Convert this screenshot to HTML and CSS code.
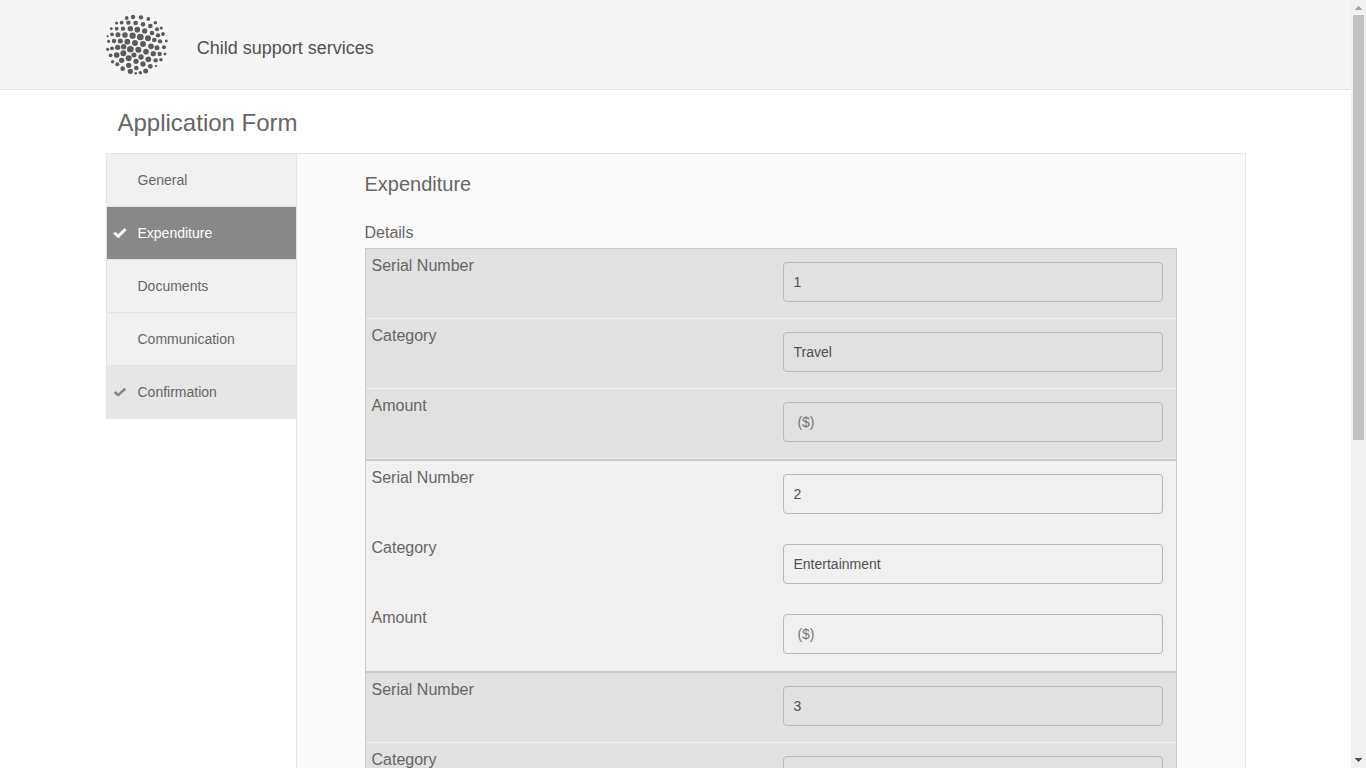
FILE: index.html
```html
<!DOCTYPE html>
<html lang="en">
<head>
<meta charset="utf-8">
<title>Child support services</title>
<link rel="stylesheet" href="styles.css">
</head>
<body>
<div class="viewport">
<div class="page">
  <header class="header">
    <svg class="logo" viewBox="0 0 222 222" id="logo" aria-hidden="true"></svg>
    <span class="brand">Child support services</span>
  </header>
  <main class="main">
    <h1 class="title">Application Form</h1>
    <div class="panel">
      <nav class="nav">
        <a class="tab">General</a>
        <a class="tab active"><svg class="check" viewBox="0 0 14 12"><path d="M1.3 5.7 5.2 9.3 12.5 2.2"/></svg>Expenditure</a>
        <a class="tab">Documents</a>
        <a class="tab">Communication</a>
        <a class="tab done"><svg class="check" viewBox="0 0 14 12"><path d="M1.7 6 5.2 9.1 12.2 2.7"/></svg>Confirmation</a>
      </nav>
      <section class="content">
        <h2 class="section-title">Expenditure</h2>
        <div class="caption">Details</div>
        <div class="group odd">
          <div class="row"><label>Serial Number</label><input value="1"></div>
          <div class="row"><label>Category</label><input value="Travel"></div>
          <div class="row"><label>Amount</label><input placeholder=" ($)"></div>
        </div>
        <div class="group even">
          <div class="row"><label>Serial Number</label><input value="2"></div>
          <div class="row"><label>Category</label><input value="Entertainment"></div>
          <div class="row"><label>Amount</label><input placeholder=" ($)"></div>
        </div>
        <div class="group odd">
          <div class="row"><label>Serial Number</label><input value="3"></div>
          <div class="row"><label>Category</label><input></div>
        </div>
      </section>
    </div>
  </main>
</div>
<div class="scrollbar">
  <svg class="arrow" viewBox="0 0 15 15"><path d="M4 10h7L7.5 6z" fill="#a3a3a3"/></svg>
  <div class="thumb"></div>
  <svg class="arrow end" viewBox="0 0 15 15"><path d="M4 5h7L7.5 9z" fill="#505050"/></svg>
</div>
</div>
<script src="logo.js"></script>
</body>
</html>
```

FILE: styles.css
```css
* { box-sizing: border-box; }
body { margin: 0; overflow: hidden; font-family: "Liberation Sans", Arial, sans-serif; color: #666; background: #fff; }
.viewport { display: flex; height: 768px; overflow: hidden; }
.page { flex: 1; min-width: 0; }
.header { height: 90px; padding-left: 100px; display: flex; background: #f5f5f5; border-bottom: 1px solid #e4e4e4; }
.logo { width: 74px; height: 74px; margin-top: 8px; fill: #5a5a5a; }
.brand { margin: 37px 0 0 22.8px; font-size: 18px; line-height: 22px; color: #505050; }
.main { padding-left: 105.5px; }
.title { margin: 0; padding: 18px 0 0 12px; height: 63px; font-size: 24px; line-height: 30px; font-weight: 400; }
.panel { display: flex; width: 1140px; border-top: 1px solid #e5e5e5; }
.nav { width: 190px; align-self: flex-start; border-left: 1px solid #e5e5e5; }
.tab { display: flex; align-items: center; height: 53px; padding-left: 31px; font-size: 14px; background: #f1f1f1; border-bottom: 1px solid #e5e5e5; }
.tab.active { padding-left: 6.5px; color: #fff; background: #888; }
.tab.done { padding-left: 6.5px; background: #e6e6e6; }
.check { width: 14px; height: 12px; margin-right: 10.5px; fill: none; stroke: #fafafa; stroke-width: 3; stroke-linejoin: round; }
.done .check { stroke: #888; stroke-width: 2.6; }
.content { width: 950px; height: 700px; padding: 18px 68px 0; background: #fafafa; border: solid #e5e5e5; border-width: 0 1px; }
.section-title { margin: 0; font-size: 20px; line-height: 24px; font-weight: 400; }
.caption { margin-top: 27px; height: 25px; font-size: 16px; line-height: 20px; }
.group { width: 812px; border: 1px solid #cacaca; }
.odd { background: #e1e1e1; }
.even { background: #f0f0f0; }
.row { display: flex; justify-content: space-between; height: 70px; padding: 13px 13px 0 6px; border-bottom: 1px solid #f0f0f0; }
.row label { margin-top: -6px; font-size: 16px; line-height: 20px; }
.row input { width: 380px; height: 40px; padding: 0 10px; border: 1px solid #b8b8b8; border-radius: 4px; background: transparent; font: 14px "Liberation Sans", Arial, sans-serif; color: #505050; }
.row input::placeholder { color: #757575; }
.scrollbar { width: 15px; display: flex; flex-direction: column; background: #f1f1f1; }
.arrow { width: 15px; height: 15px; shape-rendering: crispEdges; }
.thumb { width: 11px; height: 425px; margin-left: 2px; background: #c1c1c1; }
.end { margin-top: auto; }
```

FILE: logo.js
```javascript
// Each dot: centre x, centre y, radius.
const dots = [
 [80,30,6],[99,27,7],[123,28,7],[145,33,6],
 [50,45,5],[65,44,6],[85,44,7],[107,45,7.5],[129,49,7.5],[151,54,7.5],[166,44,5.5],
 [34,62,4.5],[50,62,6],[69,62,7],[91,62,8.5],[112,65,9],[134,69,8.5],[156,75,7.5],[171,64,6.5],[184,60,5],
 [23,85,3.5],[36,79,6],[54,80,8],[75,81,9],[98,83,10],[121,87,10.5],[144,91,9.5],[163,96,7.5],[174,82,7],[189,78,6],
 [26,100,5],[42,99,7],[61,99,8],[82,101,9],[105,105,9.5],[129,108,9.5],[153,115,9],[180,100,7],[199,99,4.5],
 [23,124,5],[36,121,6],[53,118,8.5],[71,116,8.5],[91,124,10.5],[115,125,9.5],[138,131,9],[171,119,8],[192,118,6.5],
 [32,142,6],[50,141,9],[70,136,9.5],[102,141,8],[123,147,8.5],[160,137,8.5],[179,138,7],[195,138,4.5],
 [38,161,5.5],[65,157,8.5],[86,151,9.5],[145,154,9],[167,157,7],[183,155,5.5],
 [52,169,6.5],[86,172,8.5],[108,160,8.5],[129,168,8.5],[151,175,7.5],[168,174,3.5],
 [68,182,7.5],[91,190,8.5],[109,180,7.5],[107,196,4],[121,194,5.5],[137,189,8]
];
document.getElementById("logo").innerHTML = dots.map(([x, y, r]) => `<circle cx="${x}" cy="${y}" r="${r * 0.94}"/>`).join("");
```
